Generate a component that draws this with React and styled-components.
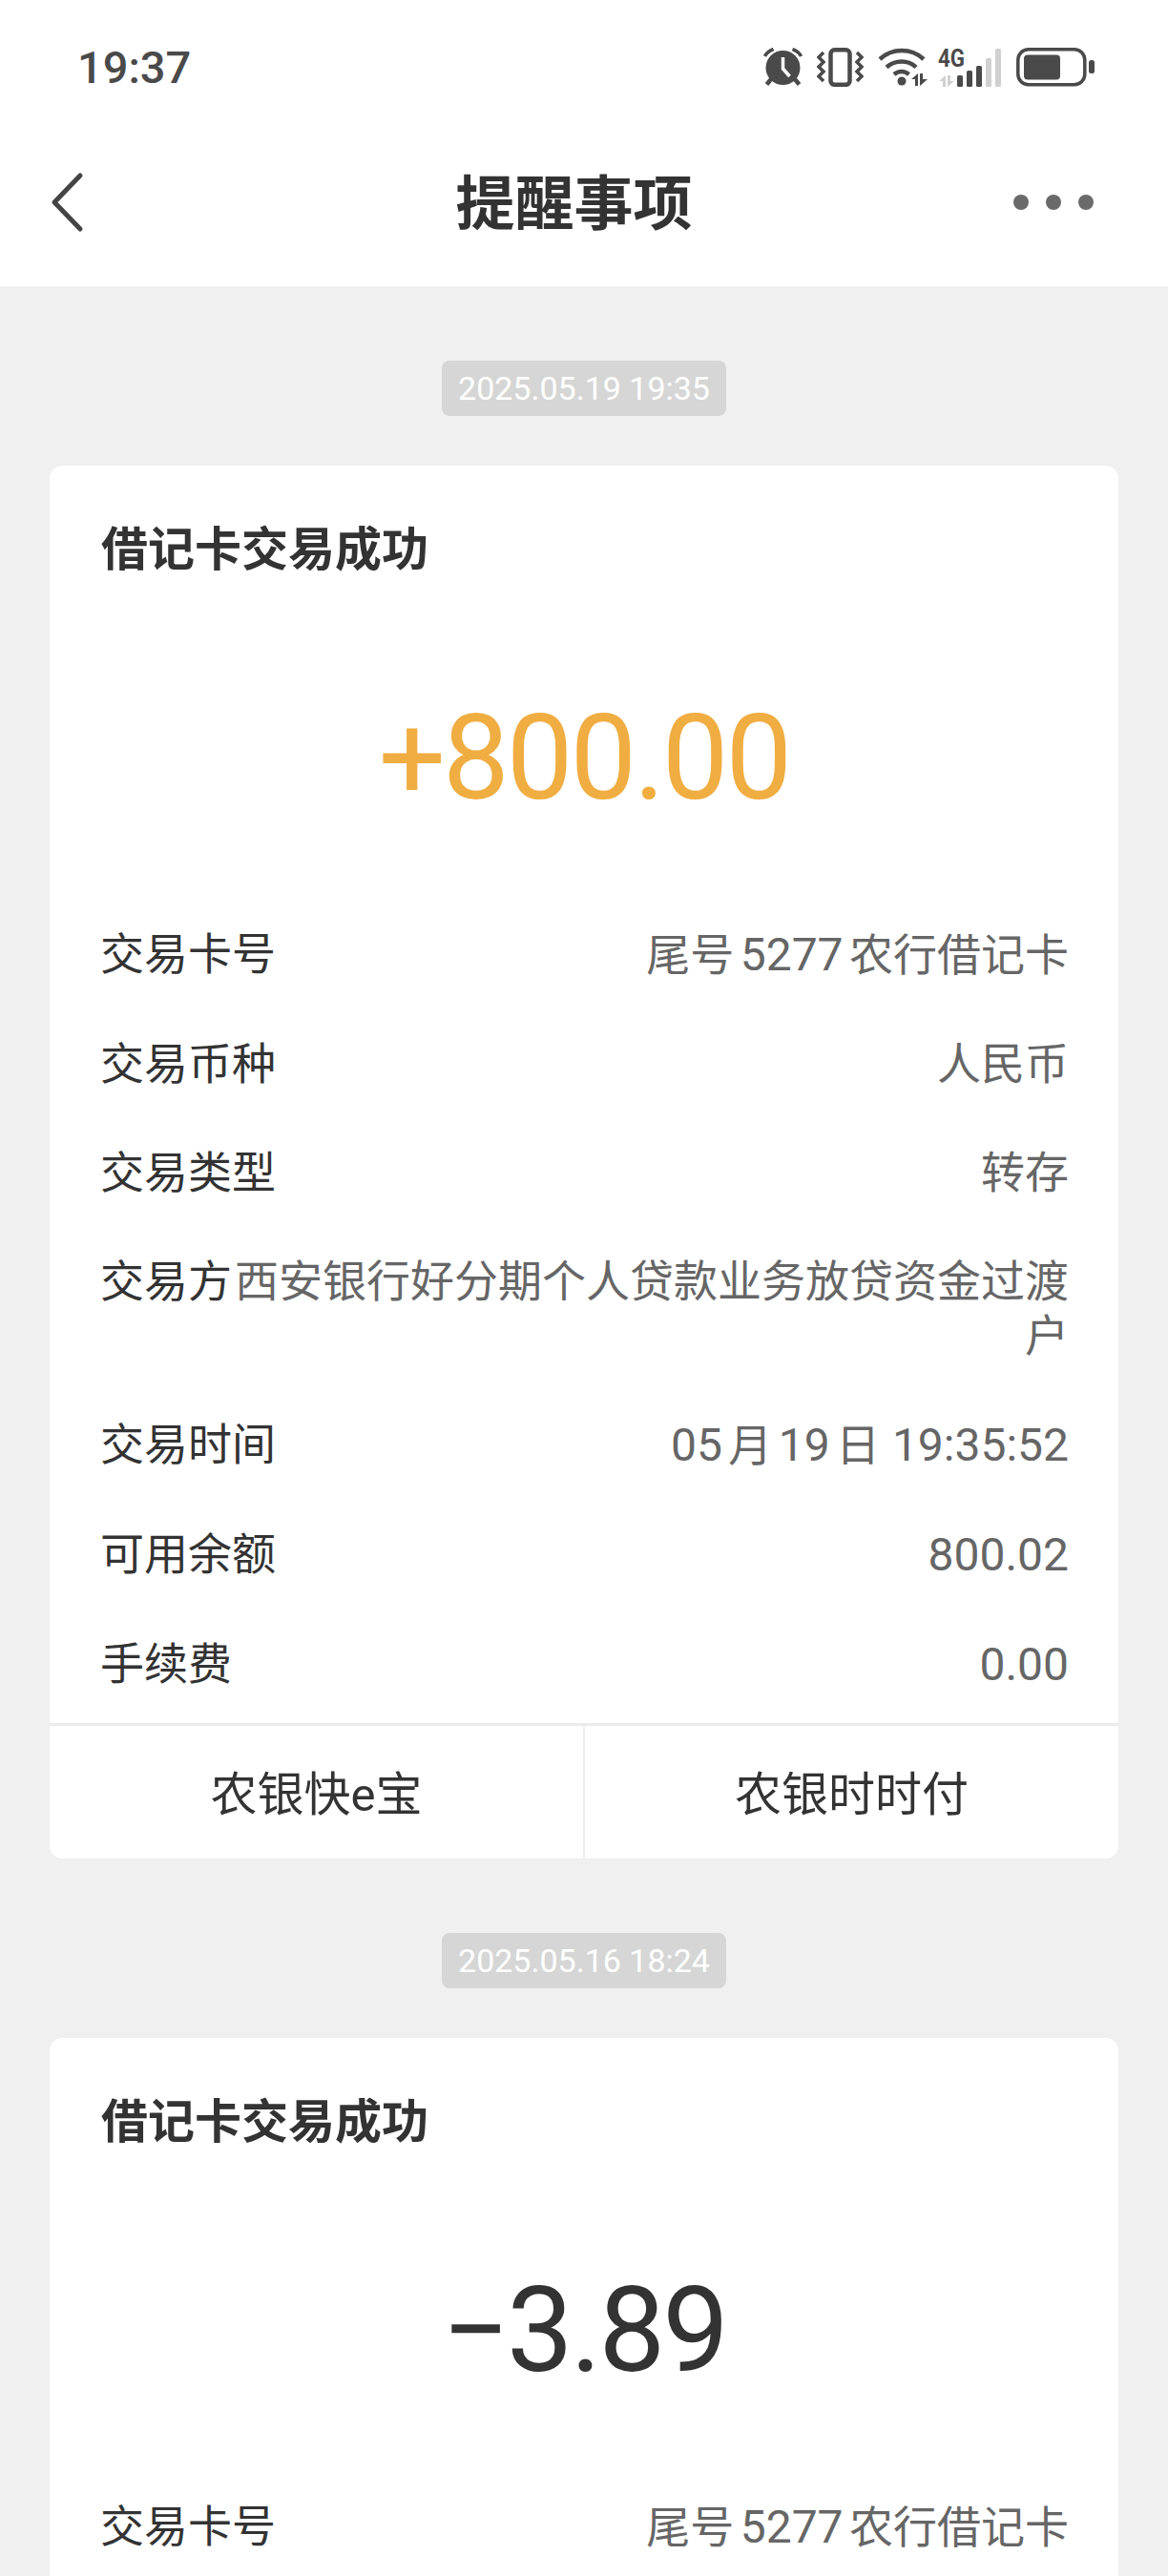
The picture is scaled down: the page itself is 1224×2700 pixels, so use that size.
import styled, { createGlobalStyle } from "styled-components";

const GlobalStyle = createGlobalStyle`
  html, body {
    margin: 0;
    padding: 0;
    background: #f0f0f0;
  }
  body {
    font-family: Roboto, "Noto Sans CJK SC", sans-serif;
  }
`;

const Page = styled.div`
  width: 1224px;
  height: 2700px;
  overflow: hidden;
  background: #f0f0f0;
`;

const TopArea = styled.header`
  height: 300px;
  background: #fff;
`;

const StatusBar = styled.div`
  height: 140px;
  display: flex;
  align-items: center;
  justify-content: space-between;
  padding: 0 77px 0 81px;
`;

const Time = styled.span`
  font-size: 47px;
  font-weight: 500;
  color: #4a4a4a;
`;

const StatusIcons = styled.div`
  display: flex;
  align-items: center;
  gap: 15px;
`;

const SignalSvg = styled.svg`
  margin-left: -4px;
  overflow: visible;
`;

const NavBar = styled.div`
  height: 144px;
  display: grid;
  grid-template-columns: 1fr auto 1fr;
  align-items: center;
  padding: 0 78px 0 52px;
`;

const NavTitle = styled.h1`
  margin: 0 0 6px 5px;
  font-size: 62px;
  font-weight: 700;
  color: #333;
`;

const MoreSvg = styled.svg`
  justify-self: end;
`;

const Feed = styled.main`
  padding: 78px 52px 0;
`;

const Stamp = styled.div`
  width: 298px;
  height: 58px;
  margin: 0 auto 52px;
  border-radius: 8px;
  background: #d6d6d6;
  color: #fff;
  font-size: 34px;
  line-height: 58px;
  text-align: center;
`;

const Card = styled.section`
  background: #fff;
  border-radius: 14px;
  margin-bottom: 78px;
  overflow: hidden;
`;

const CardTitle = styled.h2`
  margin: 0;
  padding: 57px 54px 0;
  font-size: 49px;
  line-height: 64px;
  font-weight: 700;
  color: #333;
`;

const Amount = styled.div`
  box-sizing: border-box;
  height: 334px;
  padding-top: 36px;
  display: flex;
  align-items: center;
  justify-content: center;
  font-size: 124px;
  letter-spacing: -3px;
  color: ${(p) => (p.$income ? "#f0ad41" : "#333")};
`;

const Rows = styled.div`
  padding: 0 52px 4px 53px;
`;

const Row = styled.div`
  display: flex;
  justify-content: space-between;
  padding: 29px 0 28px;
  font-size: 46px;
  line-height: 57px;
`;

const Label = styled.span`
  flex: none;
  color: #333;
`;

const Value = styled.span`
  text-align: right;
  word-spacing: -5px;
  color: #666;
`;

const Num = styled.span`
  font-size: 48px;
`;

const Actions = styled.div`
  display: flex;
  height: 139px;
  border-top: 3px solid #ececec;
`;

const Action = styled.div`
  flex: 1;
  display: flex;
  align-items: center;
  justify-content: center;
  padding-bottom: 5px;
  font-size: 49px;
  color: #333;
  & + & {
    border-left: 2px solid #ececec;
  }
`;

const AlarmIcon = () => (
  <svg width="41" height="40" viewBox="0 0 41 40">
    <circle cx="20.5" cy="21" r="18" fill="#4a4a4a" />
    <path d="M20.5 10v12l7 8" fill="none" stroke="#fff" strokeWidth="3.5" />
    <path d="M1.5 9c2-4 5-6 9-7.5M39.5 9c-2-4-5-6-9-7.5" fill="none" stroke="#4a4a4a" strokeWidth="3.5" />
    <path d="M8 33l-4.5 5.5M33 33l4.5 5.5" fill="none" stroke="#4a4a4a" strokeWidth="4.5" />
  </svg>
);

const VibrateIcon = () => (
  <svg width="49" height="41" viewBox="0 0 49 41">
    <rect x="14.5" y="2.3" width="20" height="36.5" rx="4" fill="none" stroke="#4a4a4a" strokeWidth="4.5" />
    <path d="M7 5l-5 5 5 5-5 5 5 5-5 5 5 5M42 5l5 5-5 5 5 5-5 5 5 5-5 5" fill="none" stroke="#4a4a4a" strokeWidth="3.5" />
  </svg>
);

const WifiIcon = () => (
  <svg width="52" height="41" viewBox="0 0 52 41">
    <path d="M2 12c13-12 33-12 46 0" fill="none" stroke="#4a4a4a" strokeWidth="4.5" />
    <path d="M9 20.5c9-8 23-8 31 0" fill="none" stroke="#4a4a4a" strokeWidth="4.5" />
    <path d="M17 28c4.5-4 11-4 15.5 0" fill="none" stroke="#4a4a4a" strokeWidth="4.5" />
    <circle cx="25" cy="35" r="4.5" fill="#4a4a4a" />
    <path d="M42 27v13h-3v-7h-4zM44 27h3v6h5l-8 7z" fill="#4a4a4a" />
  </svg>
);

const SignalIcon = () => (
  <SignalSvg width="67" height="41" viewBox="0 0 67 41">
    <text x="0" y="20" fontFamily="Roboto, sans-serif" fontSize="25" fontWeight="700" fill="#4a4a4a" textLength="28" lengthAdjust="spacingAndGlyphs">4G</text>
    <path d="M8 29v12h-3v-6H1zM10 29h3v6h4l-7 6z" fill="#d0d0d0" />
    <rect x="20" y="29" width="6" height="12" rx="1.5" fill="#4a4a4a" />
    <rect x="30" y="24" width="6" height="17" rx="1.5" fill="#4a4a4a" />
    <rect x="40" y="19" width="6" height="22" rx="1.5" fill="#4a4a4a" />
    <rect x="50" y="11" width="6" height="30" rx="1.5" fill="#d0d0d0" />
    <rect x="60" y="1" width="6" height="40" rx="1.5" fill="#d0d0d0" />
  </SignalSvg>
);

const BatteryIcon = () => (
  <svg width="82" height="41" viewBox="0 0 82 41">
    <rect x="1.8" y="1.8" width="70" height="37" rx="11" fill="none" stroke="#4a4a4a" strokeWidth="3.5" />
    <rect x="8" y="7.5" width="38" height="26" rx="4" fill="#4a4a4a" />
    <rect x="76" y="13" width="6" height="14" rx="2.5" fill="#4a4a4a" />
  </svg>
);

const BackIcon = () => (
  <svg width="36" height="64" viewBox="0 0 36 64">
    <path d="M32 4L5 32l27 28" fill="none" stroke="#444" strokeWidth="5" strokeLinecap="round" strokeLinejoin="round" />
  </svg>
);

const MoreIcon = () => (
  <MoreSvg width="84" height="16" viewBox="0 0 84 16">
    <circle cx="8" cy="8" r="8" fill="#6a6a6a" />
    <circle cx="42" cy="8" r="8" fill="#6a6a6a" />
    <circle cx="76" cy="8" r="8" fill="#6a6a6a" />
  </MoreSvg>
);

const firstRows = [
  ["交易卡号", "尾号 5277 农行借记卡"],
  ["交易币种", "人民币"],
  ["交易类型", "转存"],
  ["交易方", "西安银行好分期个人贷款业务放贷资金过渡户"],
  ["交易时间", "05 月 19 日\u00a0 19:35:52"],
  ["可用余额", "800.02"],
  ["手续费", "0.00"],
];

// digits run a little bigger than the chinese text next to them
const withNums = (text) =>
  text.split(/(\d[\d.:]*)/).map((part, i) => (i % 2 ? <Num key={i}>{part}</Num> : part));

const App = () => {
  return (
    <Page>
      <GlobalStyle />
      <TopArea>
        <StatusBar>
          <Time>19:37</Time>
          <StatusIcons>
            <AlarmIcon />
            <VibrateIcon />
            <WifiIcon />
            <SignalIcon />
            <BatteryIcon />
          </StatusIcons>
        </StatusBar>
        <NavBar>
          <BackIcon />
          <NavTitle>提醒事项</NavTitle>
          <MoreIcon />
        </NavBar>
      </TopArea>
      <Feed>
        <Stamp>2025.05.19 19:35</Stamp>
        <Card>
          <CardTitle>借记卡交易成功</CardTitle>
          <Amount $income>+800.00</Amount>
          <Rows>
            {firstRows.map(([label, value]) => (
              <Row key={label}>
                <Label>{label}</Label>
                <Value>{withNums(value)}</Value>
              </Row>
            ))}
          </Rows>
          <Actions>
            <Action>农银快e宝</Action>
            <Action>农银时时付</Action>
          </Actions>
        </Card>
        <Stamp>2025.05.16 18:24</Stamp>
        <Card>
          <CardTitle>借记卡交易成功</CardTitle>
          <Amount>−3.89</Amount>
          <Rows>
            <Row>
              <Label>交易卡号</Label>
              <Value>{withNums("尾号 5277 农行借记卡")}</Value>
            </Row>
          </Rows>
        </Card>
      </Feed>
    </Page>
  );
};

export default App;
